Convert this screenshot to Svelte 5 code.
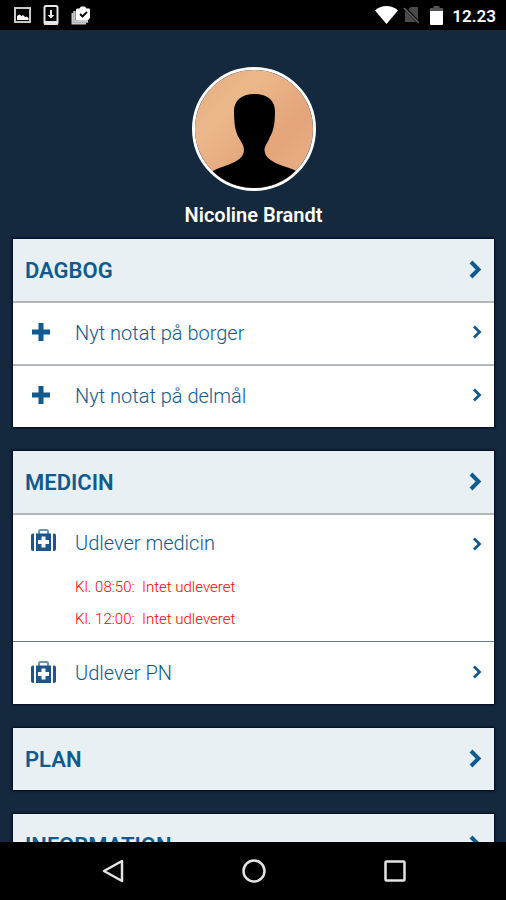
<script lang="ts">
  type Item = { label: string; icon: "plus" | "kit"; notes?: string[] };
  type Section = { title: string; items: Item[] };

  const name = "Nicoline Brandt";

  const sections: Section[] = [
    {
      title: "DAGBOG",
      items: [
        { label: "Nyt notat på borger", icon: "plus" },
        { label: "Nyt notat på delmål", icon: "plus" },
      ],
    },
    {
      title: "MEDICIN",
      items: [
        {
          label: "Udlever medicin",
          icon: "kit",
          notes: ["Kl. 08:50:\u00a0 Intet udleveret", "Kl. 12:00:\u00a0 Intet udleveret"],
        },
        { label: "Udlever PN", icon: "kit" },
      ],
    },
    { title: "PLAN", items: [] },
    { title: "INFORMATION", items: [] },
  ];
</script>

<div class="screen">
  <header class="status-bar">
    <div class="status-group notifications">
      <svg width="18" height="18" viewBox="0 0 18 18" aria-hidden="true">
        <rect x="2" y="2" width="15" height="14" fill="none" stroke="#c8c8c8" stroke-width="2" />
        <path d="M4 14v-4l2.500-1.500 2 1.500 1.500-1 2 2 1.500-.5 2 1.500v2z" fill="#fff" />
      </svg>
      <svg width="16" height="20" viewBox="0 0 16 20" aria-hidden="true">
        <rect x="1.500" y="1" width="13" height="18" rx="1.500" fill="none" stroke="#e6e6e6" stroke-width="2" />
        <path d="M1 16h14v3.500H1z" fill="#e6e6e6" />
        <path d="M7 5h2v5h2.500L8 13.500 4.500 10H7z" fill="#e6e6e6" />
      </svg>
      <svg width="20" height="20" viewBox="0 0 20 20" aria-hidden="true">
        <path d="M1.500 8v10.500H15" fill="none" stroke="#ccc" stroke-width="2" />
        <path d="M3.500 6v10.500H17" fill="none" stroke="#ccc" stroke-width="2.400" />
        <path d="M8.500 3.500 10 1.500h4l1.500 2H18a1 1 0 0 1 1 1V13l-2 2.500H6a1 1 0 0 1-1-1v-10l1-1z" fill="#fff" />
        <path d="m9 9 2.500 2.500L16 7" fill="none" stroke="#000" stroke-width="1.800" />
      </svg>
    </div>
    <div class="status-group">
      <svg width="23" height="18" viewBox="0 0 23 18" aria-hidden="true">
        <path d="M0 4.500C3 1.500 7 0 11.500 0S20 1.500 23 4.500L11.500 18z" fill="#fff" />
      </svg>
      <svg class="sim" width="18" height="18" viewBox="0 0 18 18" aria-hidden="true">
        <path d="M8 1h7v15H2V6z" fill="#4a4a4a" />
        <path d="m1 1 15 16" stroke="#000" stroke-width="3" />
        <path d="m1 2 15 15" stroke="#666" stroke-width="1.500" />
      </svg>
      <svg width="13" height="19" viewBox="0 0 13 19" aria-hidden="true">
        <path d="M3.500 0h6v2H13v3H0V2h3.500z" fill="#555" />
        <path d="M0 5h13v13a1 1 0 0 1-1 1H1a1 1 0 0 1-1-1z" fill="#fff" />
      </svg>
      <time class="clock">12.23</time>
    </div>
  </header>

  <main>
    <div class="profile">
      <svg class="avatar" viewBox="0 0 118 118" aria-hidden="true">
        <defs>
          <linearGradient id="skin" x1="0" y1="0" x2="1" y2="1">
            <stop offset="0" stop-color="#e6ad80" />
            <stop offset="0.300" stop-color="#ebb88c" />
            <stop offset="0.650" stop-color="#e5a47a" />
            <stop offset="1" stop-color="#eab28a" />
          </linearGradient>
        </defs>
        <rect width="118" height="118" fill="url(#skin)" />
        <path
          d="M59.500 24C46 24 39 31 39 41c0 13 1.500 21 5 27 3 5 5 8 5 12-.5 8-7 11-15 14.500-8 3-12 4-17 7V118h85v-16.500c-5-3-10-4-18-7-8-3.500-14-7-14.500-14.500 0-4 3-7 5-12 4-7 5.500-14 5.500-27 0-10-7-17-20.500-17z"
          fill="#000"
        />
      </svg>
      <h1>{name}</h1>
    </div>

    {#each sections as section}
      <section class="card">
        <h2>
          <a class="card-head" href="#{section.title.toLowerCase()}">
            {section.title}
            <svg width="13" height="19" viewBox="0 0 13 19" aria-hidden="true">
              <path d="m2 2 7.500 7.500L2 17" fill="none" stroke="#105a8f" stroke-width="4" />
            </svg>
          </a>
        </h2>
        {#each section.items as item}
          <a class="row" class:detailed={item.notes} href="#{section.title.toLowerCase()}">
            <span class="icon">
              {#if item.icon === "plus"}
                <svg width="20" height="20" viewBox="0 0 20 20" aria-hidden="true">
                  <path d="M10 1v18M1 10h18" stroke="#105a8f" stroke-width="5" stroke-linejoin="round" />
                </svg>
              {:else}
                <svg width="26" height="22" viewBox="0 0 26 22" aria-hidden="true">
                  <path d="M8 5V2.500Q8 1 9.500 1h6Q17 1 17 2.500V5" fill="none" stroke="#6f93b3" stroke-width="2" />
                  <path d="M5 4.500h15V22H5zM3 4.500V22H2q-2 0-2-2V6.500q0-2 2-2zM22 4.500V22h1q2 0 2-2V6.500q0-2-2-2z" fill="#1b568c" />
                  <path d="M12.500 7.500v11M7 13h11" stroke="#fff" stroke-width="4" />
                </svg>
              {/if}
            </span>
            <span class="text">
              <span class="label">{item.label}</span>
              {#each item.notes ?? [] as note}
                <span class="note">{note}</span>
              {/each}
            </span>
            <svg class="chevron" width="10" height="14" viewBox="0 0 10 14" aria-hidden="true">
              <path d="m2 1.500 5.500 5.500L2 12.500" fill="none" stroke="#105a8f" stroke-width="2.800" />
            </svg>
          </a>
        {/each}
      </section>
    {/each}
  </main>

  <nav class="nav-bar" aria-label="System">
    <button type="button" aria-label="Back">
      <svg width="24" height="24" viewBox="0 0 24 24" aria-hidden="true">
        <path d="M21 2v20L3 12z" />
      </svg>
    </button>
    <button type="button" aria-label="Home">
      <svg width="24" height="24" viewBox="0 0 24 24" aria-hidden="true">
        <circle cx="12" cy="12" r="10.500" />
      </svg>
    </button>
    <button type="button" aria-label="Recent apps">
      <svg width="24" height="24" viewBox="0 0 24 24" aria-hidden="true">
        <rect x="2.500" y="2.500" width="19" height="19" rx="1" />
      </svg>
    </button>
  </nav>
</div>

<style>
  :global(body) {
    margin: 0;
    background: #000;
  }
  .screen {
    display: flex;
    flex-direction: column;
    height: 100vh;
    background: #14283e;
    color: #fff;
    font-family: Roboto, "Liberation Sans", sans-serif;
  }
  .status-bar {
    display: flex;
    flex: none;
    align-items: center;
    justify-content: space-between;
    height: 30px;
    padding: 0 10px 0 13px;
    background: #000;
  }
  .status-group {
    display: flex;
    align-items: center;
    gap: 9px;
  }
  .notifications {
    gap: 12px;
  }
  .sim {
    margin-left: -4px;
  }
  .clock {
    padding-top: 2px;
    font-size: 17px;
    font-weight: 600;
    line-height: 28px;
  }
  main {
    flex: 1;
    min-height: 0;
    overflow: hidden;
    padding: 0 12px 0 13px;
  }
  .profile {
    display: flex;
    flex-direction: column;
    align-items: center;
    padding-top: 37px;
  }
  .avatar {
    width: 118px;
    height: 118px;
    border: 3px solid #fff;
    border-radius: 50%;
  }
  h1 {
    margin: 12px 0;
    font-size: 20px;
    font-weight: 600;
    line-height: 24px;
  }
  h2 {
    margin: 0;
    font-size: 22px;
    font-weight: 600;
  }
  .card {
    margin-bottom: 24px;
    background: #fff;
    box-shadow: 0 0 2px 1px #020a20;
  }
  .card-head,
  .row {
    display: flex;
    color: #105a8f;
    text-decoration: none;
  }
  .card-head {
    align-items: center;
    justify-content: space-between;
    padding: 2px 12px 0;
    line-height: 60px;
    background: #e8f0f3;
  }
  .card-head svg {
    margin-bottom: 4px;
  }
  .row {
    padding: 0 12px 0 18px;
    border-top: 2px solid #b4b8bc;
    font-size: 20px;
    font-weight: 300;
    line-height: 61px;
  }
  .icon {
    display: flex;
    flex: none;
    align-items: center;
    width: 44px;
    height: 58px;
  }
  .text {
    display: flex;
    flex: 1;
    flex-direction: column;
  }
  .note {
    color: #f00;
    font-size: 15px;
    line-height: 32px;
  }
  .chevron {
    flex: none;
    margin-top: 22px;
  }
  .detailed {
    padding-bottom: 6px;
    line-height: 56px;
  }
  .detailed .icon {
    height: 50px;
  }
  .detailed + .row {
    padding-top: 1px;
    border-top: 1px solid #70748a;
  }
  .nav-bar {
    display: flex;
    flex: none;
    justify-content: center;
    height: 58px;
    padding-left: 2px;
    background: #000;
  }
  .nav-bar button {
    display: flex;
    align-items: center;
    justify-content: center;
    width: 28%;
    padding: 0;
    border: 0;
    background: none;
  }
  .nav-bar svg {
    fill: none;
    stroke: #e4e4e4;
    stroke-width: 2.500;
    stroke-linejoin: round;
  }
</style>
